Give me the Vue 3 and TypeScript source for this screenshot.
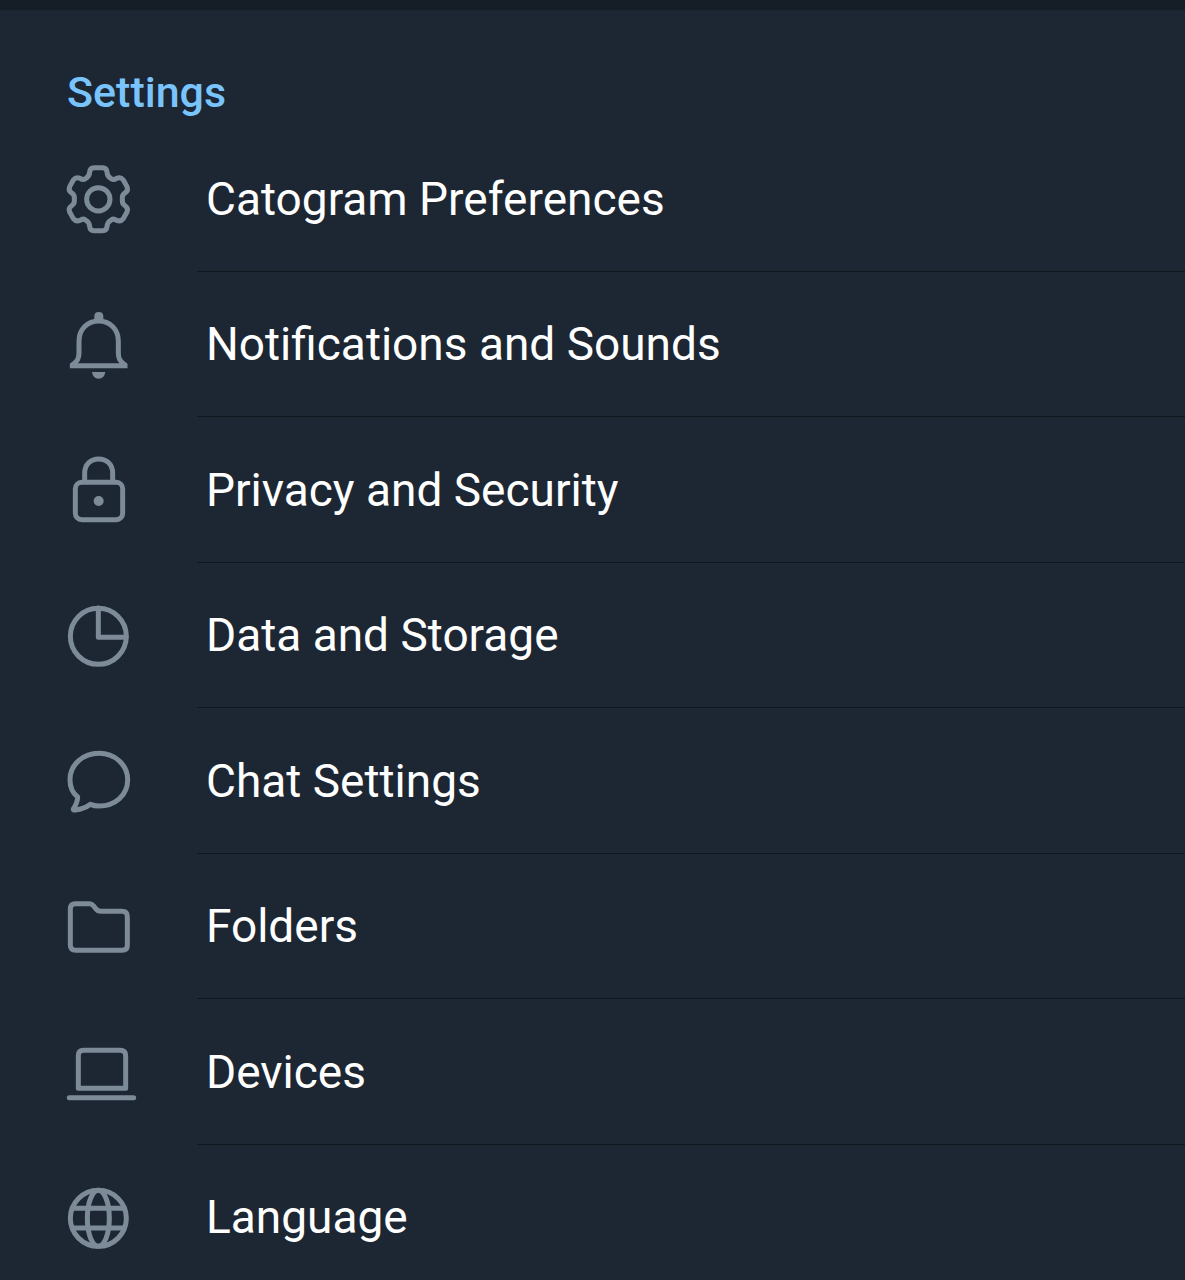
<script setup lang="ts">
type IconName = 'gear' | 'bell' | 'lock' | 'chart' | 'chat' | 'folder' | 'laptop' | 'globe'

interface SettingsItem {
  icon: IconName
  label: string
}

const items: SettingsItem[] = [
  { icon: 'gear', label: 'Catogram Preferences' },
  { icon: 'bell', label: 'Notifications and Sounds' },
  { icon: 'lock', label: 'Privacy and Security' },
  { icon: 'chart', label: 'Data and Storage' },
  { icon: 'chat', label: 'Chat Settings' },
  { icon: 'folder', label: 'Folders' },
  { icon: 'laptop', label: 'Devices' },
  { icon: 'globe', label: 'Language' },
]
</script>

<template>
  <main class="page">
    <div class="section-gap"></div>
    <h1 class="title">Settings</h1>
    <ul class="list">
      <li v-for="item in items" :key="item.icon" class="item">
        <button type="button" class="row">
          <svg class="icon" viewBox="0 0 300 300" aria-hidden="true">
            <g v-if="item.icon === 'gear'">
              <circle cx="145" cy="151" r="35" />
              <path
                d="M132 56H158Q170 56 171 69Q172 82 181 87L185 90Q191 94 200 88Q212 83 220 93L231 113Q236 124 226 131Q217 137 217 145V157Q217 165 226 171Q236 178 231 189L220 209Q212 219 200 214Q191 208 185 212L181 215Q172 220 171 233Q170 245 158 245H132Q120 245 119 233Q118 220 109 215L105 212Q99 208 90 214Q78 219 70 209L59 189Q54 178 64 171Q73 165 73 157V145Q73 137 64 131Q54 124 59 113L70 93Q78 83 90 88Q99 94 105 90L109 87Q118 82 119 69Q120 56 132 56Z"
              />
            </g>
            <g v-else-if="item.icon === 'bell'">
              <path
                stroke-linejoin="miter"
                d="M87 138C87 102 113 78 146 78S205 102 205 138V174C205 192 210 198 225 210V212H67V210C82 198 87 192 87 174Z"
              />
              <path class="solid" d="M133 76V64Q133 51 146 51Q160 51 160 64V76ZM126 231H166Q163 251 146 251Q129 251 126 231Z" />
            </g>
            <g v-else-if="item.icon === 'lock'">
              <path d="M104 124V100C104 73 122 57 146 57S188 73 188 100V124" />
              <rect x="76" y="127" width="142" height="112" rx="19" />
              <circle class="solid" cx="146" cy="183" r="15" />
            </g>
            <g v-else-if="item.icon === 'chart'">
              <circle cx="145" cy="151" r="84" />
              <path d="M145 66V154H228" />
            </g>
            <g v-else-if="item.icon === 'chat'">
              <path
                d="M147 67C101 67 60 99 60 146C60 168 68 186 83 198C83 213 76 225 70 234Q69 238 76 237Q103 234 121 220Q133 225 147 225C194 225 233 194 233 146C233 99 192 67 147 67Z"
              />
            </g>
            <g v-else-if="item.icon === 'folder'">
              <path
                d="M76 80H119Q125 80 130 86L138 96Q144 103 151 103H216Q232 103 232 119V205Q232 220 216 220H78Q61 220 61 204V96Q61 80 76 80Z"
              />
            </g>
            <g v-else-if="item.icon === 'laptop'">
              <path d="M85 199V101Q85 85 101 85H210Q227 85 227 101V199Z" />
              <path d="M58 227H251" />
            </g>
            <g v-else>
              <circle cx="145" cy="151" r="84" />
              <ellipse cx="145" cy="151" rx="33" ry="84" />
              <path d="M69 121H221M69 180H221" />
            </g>
          </svg>
          <span class="label">{{ item.label }}</span>
        </button>
      </li>
    </ul>
  </main>
</template>

<style>
body {
  margin: 0;
  background: #1d2733;
}
</style>

<style scoped>
.page {
  height: 100vh;
  overflow: hidden;
  background: #1d2733;
  color: #ffffff;
  font-family: Roboto, sans-serif;
}

.section-gap {
  height: 10px;
  background: #151e27;
}

.title {
  margin: 0;
  padding: 52px 67px 4px;
  color: #79c4fc;
  font-size: 43px;
  font-weight: 500;
  line-height: 60px;
}

.list {
  margin: 0;
  padding: 0;
  list-style: none;
}

.item {
  height: 146px;
}

.item:nth-child(even) {
  height: 145px;
}

.row {
  display: flex;
  align-items: flex-start;
  width: 100%;
  height: 100%;
  padding: 0 0 0 50px;
  border: 0;
  background: none;
  color: inherit;
  font: inherit;
  text-align: left;
  cursor: pointer;
}

.icon {
  flex: none;
  width: 100px;
  height: 100px;
  margin: 23px 47px 0 0;
  fill: none;
  stroke: #7d8b99;
  stroke-width: 15;
  stroke-linecap: round;
  stroke-linejoin: round;
}

.solid {
  fill: #7d8b99;
  stroke: none;
}

.label {
  display: flex;
  flex: 1;
  align-items: center;
  align-self: stretch;
  padding-left: 9px;
  border-bottom: 1px solid #10161d;
  font-size: 46px;
  line-height: 60px;
}
</style>
